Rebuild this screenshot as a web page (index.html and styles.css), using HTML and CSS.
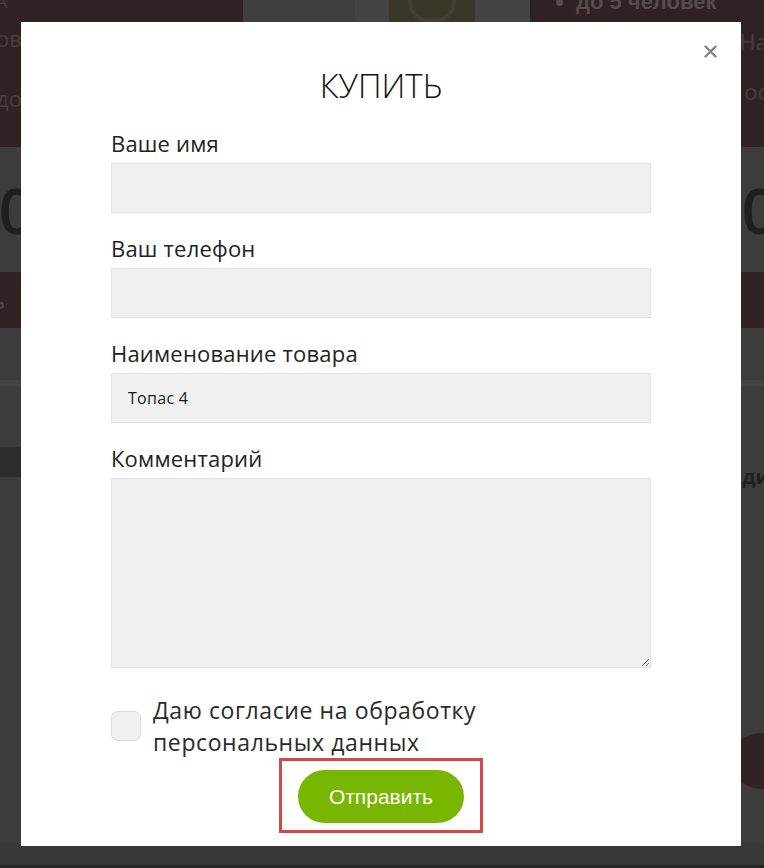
FILE: index.html
```html
<!DOCTYPE html>
<html lang="ru">
<head>
    <meta charset="UTF-8">
    <meta name="viewport" content="width=device-width, initial-scale=1.0">
    <title>Купить</title>
    <link rel="stylesheet" href="styles.css">
</head>
<body>
    <div class="page">
        <div class="top-band">
            <div class="top-left">
                <span class="frag frag-a">А</span>
                <span class="frag">ов</span>
                <span class="frag">до</span>
            </div>
            <div class="top-photo">
                <div class="photo-light">
                    <div class="photo-logo"><div class="logo-cup"></div></div>
                </div>
            </div>
            <div class="top-right">
                <ul class="features">
                    <li>до 5 человек</li>
                </ul>
                <span class="frag frag-r">На</span>
                <span class="frag frag-r">ос</span>
            </div>
        </div>
        <div class="price-band">
            <span class="price price-left">40</span>
            <span class="price price-right">0</span>
        </div>
        <div class="red-band"><span class="frag">ь</span></div>
        <div class="gray-area">
            <div class="divider"></div>
            <div class="dark-strip"></div>
            <div class="side-text">ди</div>
            <div class="red-dot"></div>
        </div>
        <div class="footer-strip"></div>
    </div>

    <div class="modal">
        <button class="close" aria-label="Закрыть">
            <svg width="13" height="13" viewBox="0 0 13 13">
                <path d="M1.5 1.5 L11.5 11.5 M11.5 1.5 L1.5 11.5" stroke="#858585" stroke-width="2.4" stroke-linecap="round"/>
            </svg>
        </button>
        <h2 class="modal-title">КУПИТЬ</h2>
        <form class="buy-form">
            <div class="field">
                <label for="nameInput">Ваше имя</label>
                <input type="text" id="nameInput">
            </div>
            <div class="field">
                <label for="phoneInput">Ваш телефон</label>
                <input type="text" id="phoneInput">
            </div>
            <div class="field">
                <label for="productInput">Наименование товара</label>
                <input type="text" id="productInput" value="Топас 4">
            </div>
            <div class="field">
                <label for="commentInput">Комментарий</label>
                <textarea id="commentInput"></textarea>
            </div>
            <label class="agree">
                <input type="checkbox">
                <span>Даю согласие на обработку<br>персональных данных</span>
            </label>
            <div class="submit-wrap">
                <button type="button" class="submit">Отправить</button>
            </div>
        </form>
    </div>
</body>
</html>
```

FILE: styles.css
```css
body {
    margin: 0;
    background-color: #3c3c3c;
    font-family: "Open Sans", "Noto Sans", sans-serif;
    overflow: hidden;
}
.page {
    height: 868px;
    display: flex;
    flex-direction: column;
}
.frag {
    display: block;
    color: #4a3c3e;
    font-size: 22px;
    line-height: 60px;
    margin-left: -4px;
}
.top-band {
    height: 147px;
    display: flex;
    background-color: #302224;
    overflow: hidden;
}
.top-left {
    width: 243px;
}
.top-left .frag-a {
    line-height: 14px;
    margin-top: -6px;
    font-size: 18px;
}
.top-photo {
    width: 287px;
    background-color: #3f3f3f;
    display: flex;
    justify-content: flex-end;
}
.photo-light {
    width: 175px;
    background-color: #444;
}
.photo-logo {
    width: 86px;
    height: 22px;
    margin-left: 34px;
    background-color: #3a3726;
    display: flex;
    justify-content: center;
}
.logo-cup {
    width: 40px;
    height: 18px;
    border: 4px solid #403f3a;
    border-top: none;
    border-radius: 0 0 20px 20px;
}
.top-right {
    flex: 1;
    padding-left: 30px;
}
.features {
    margin: -12px 0 0;
    padding-left: 16px;
    color: #574b4d;
    font-family: "Liberation Sans", Arial, sans-serif;
    font-weight: bold;
    font-size: 22px;
    line-height: 28px;
}
.top-right .frag-r {
    text-align: right;
    margin-right: -4px;
    line-height: 50px;
}
.price-band {
    height: 125px;
    display: flex;
    justify-content: space-between;
    align-items: center;
    overflow: hidden;
}
.price {
    font-size: 64px;
    color: #1f1f1f;
    font-weight: 600;
}
.price-left {
    margin-left: -38px;
}
.price-right {
    margin-right: -14px;
}
.red-band {
    height: 56px;
    background-color: #312224;
}
.red-band .frag {
    line-height: 56px;
    margin-left: -8px;
    color: #564749;
}
.gray-area {
    flex: 1;
    position: relative;
}
.divider {
    height: 6px;
    margin-top: 52px;
    background-color: #434343;
}
.dark-strip {
    width: 40px;
    height: 30px;
    margin-top: 61px;
    background-color: #2c2c2c;
}
.side-text {
    text-align: right;
    font-size: 20px;
    font-weight: bold;
    color: #1f1f1f;
    margin: -14px -6px 0 0;
}
.red-dot {
    position: absolute;
    right: -30px;
    top: 405px;
    width: 64px;
    height: 56px;
    border-radius: 50%;
    background-color: #312224;
}
.footer-strip {
    height: 22px;
    background-color: #383838;
    border-bottom: 3px solid #262626;
}

.modal {
    position: absolute;
    top: 22px;
    left: 21px;
    width: 720px;
    height: 824px;
    background-color: #fff;
    box-sizing: border-box;
    padding: 44px 90px 0;
}
.close {
    position: absolute;
    top: 23px;
    right: 24px;
    padding: 0;
    border: none;
    background: none;
    line-height: 0;
    cursor: pointer;
}
.modal-title {
    margin: 0 0 22px;
    text-align: center;
    font-weight: 300;
    font-size: 33px;
    line-height: 40px;
    color: #111;
}
.field {
    margin-bottom: 20px;
}
.field label {
    display: block;
    font-size: 22px;
    line-height: 30px;
    letter-spacing: 0.2px;
    margin-bottom: 5px;
    color: #222;
}
.field input, .field textarea {
    display: block;
    width: 100%;
    box-sizing: border-box;
    height: 50px;
    padding: 0 16px;
    background-color: #f0f0f0;
    border: 1px solid #e2e2e2;
    font-family: "Open Sans", sans-serif;
    font-size: 16px;
    letter-spacing: 0.3px;
    color: #1a1a1a;
    outline: none;
}
.field textarea {
    height: 190px;
    padding: 10px 16px;
}
.agree {
    display: flex;
    align-items: center;
    gap: 12px;
    margin-top: 26px;
    font-size: 23px;
    line-height: 32px;
    color: #2a2a2a;
    letter-spacing: 0.6px;
}
.agree input {
    appearance: none;
    margin: 0;
    width: 30px;
    height: 30px;
    flex-shrink: 0;
    border: 1px solid #dcdcdc;
    border-radius: 7px;
    background-color: #f0f0f0;
}
.submit-wrap {
    width: 204px;
    margin: 0 auto;
    box-sizing: border-box;
    border: 3px solid #d5484a;
    padding: 9px 16px 7px;
}
.submit {
    display: block;
    width: 166px;
    height: 53px;
    border: none;
    border-radius: 27px;
    background-color: #79b600;
    color: #fff;
    font-family: "Liberation Sans", Arial, sans-serif;
    font-size: 21px;
    cursor: pointer;
}
```
